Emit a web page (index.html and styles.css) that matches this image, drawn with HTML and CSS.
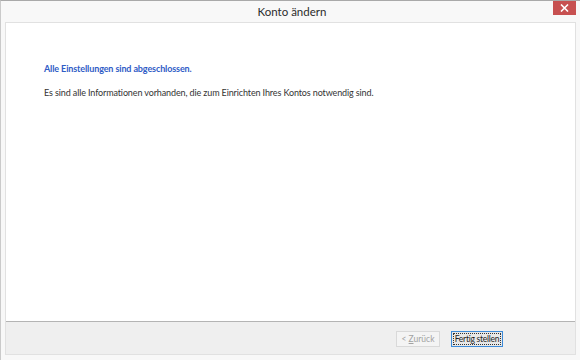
FILE: index.html
```html
<!DOCTYPE html>
<html lang="de">
<head>
  <meta charset="UTF-8">
  <title>Konto ändern</title>
  <link rel="stylesheet" href="styles.css">
</head>
<body>
  <div class="window">
    <!-- Title bar with the close button -->
    <div class="title-bar">
      <span></span>
      <div class="title">Konto ändern</div>
      <button class="close-btn" aria-label="Schließen">
        <svg width="9" height="8" viewBox="0 0 9 8">
          <path d="M1 0.5 L8 7.5 M8 0.5 L1 7.5" stroke="#ffffff" stroke-width="1.6"/>
        </svg>
      </button>
    </div>

    <div class="panel">
      <div class="panel-body">
        <p class="heading">Alle Einstellungen sind abgeschlossen.</p>
        <p class="info">Es sind alle Informationen vorhanden, die zum Einrichten Ihres Kontos notwendig sind.</p>
      </div>
      <div class="panel-footer">
        <button class="btn" disabled>&lt; <u>Z</u>urück</button>
        <button class="btn default">Fertig stellen</button>
      </div>
    </div>
  </div>
</body>
</html>
```

FILE: styles.css
```css
html, body {
  margin: 0;
  padding: 0;
  height: 100%;
  background: #f7f7f7;
  font-family: Lato, "Noto Sans", sans-serif;
}
/* Whole dialog window */
.window {
  width: 580px;
  height: 360px;
  box-sizing: border-box;
  border-top: 1px solid #a9a9a9;
  border-left: 1px solid #cacaca;
  background: #f8f8f8;
  display: flex;
  flex-direction: column;
}
.title-bar {
  height: 21px;
  display: grid;
  grid-template-columns: 1fr auto 1fr;
  align-items: start;
}
.title {
  font-size: 11.5px;
  line-height: 22px;
  color: #2b2b2b;
  padding-left: 3px;
}
.close-btn {
  justify-self: end;
  width: 23px;
  height: 14px;
  margin-right: 4px;
  padding: 0;
  border: none;
  background: #c75050;
  display: flex;
  align-items: center;
  justify-content: center;
}
/* Inner page of the wizard */
.panel {
  flex: 1;
  margin: 0 4px 5px 4px;
  border: 1px solid #e1e1e1;
  display: flex;
  flex-direction: column;
}
.panel-body {
  flex: 1;
  background: #ffffff;
  padding: 39px 20px 0 38px;
}
.panel-body p {
  margin: 0;
  font-size: 9px;
  line-height: 14px;
  letter-spacing: -0.12px;
}
.heading {
  color: #2f5cc6;
  font-weight: 700;
  margin-bottom: 10px !important;
}
.info {
  color: #333333;
}
.panel-footer {
  height: 33px;
  box-sizing: border-box;
  border-top: 1px solid #b4b4b4;
  background: #efefef;
  display: flex;
  justify-content: flex-end;
  align-items: flex-start;
  gap: 11px;
  padding: 9px 72px 0 0;
}
.btn {
  height: 16px;
  padding: 0;
  font-family: inherit;
  font-size: 8.5px;
  line-height: 13px;
  white-space: nowrap;
  background: #f2f2f2;
  border: 1px solid #c3c3c3;
  color: #1e1e1e;
}
.btn:disabled {
  width: 44px;
  background: #f4f4f4;
  border-color: #d9d9d9;
  color: #a2a2a2;
}
.btn u {
  text-decoration: underline;
}
.btn.default {
  width: 52px;
  letter-spacing: -0.25px;
  border-color: #3c8ad8;
  outline: 1px dotted #333;
  outline-offset: -3px;
  background: #e8e8e8;
}
```
